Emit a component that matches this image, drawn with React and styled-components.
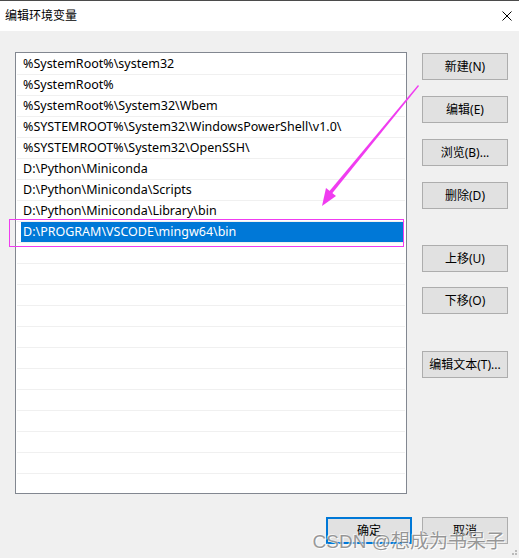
import React from 'react'
import styled, { createGlobalStyle, css } from 'styled-components'

const GlobalStyle = createGlobalStyle`
  html, body {
    margin: 0;
    padding: 0;
    background: #f0f0f0;
  }
  * {
    box-sizing: border-box;
  }
`

const font = `"Noto Sans", "Noto Sans CJK SC", sans-serif`

const paths = [
  '%SystemRoot%\\system32',
  '%SystemRoot%',
  '%SystemRoot%\\System32\\Wbem',
  '%SYSTEMROOT%\\System32\\WindowsPowerShell\\v1.0\\',
  '%SYSTEMROOT%\\System32\\OpenSSH\\',
  'D:\\Python\\Miniconda',
  'D:\\Python\\Miniconda\\Scripts',
  'D:\\Python\\Miniconda\\Library\\bin',
  'D:\\PROGRAM\\VSCODE\\mingw64\\bin',
]

const TOTAL_ROWS = 21
const SELECTED = 8

const Window = styled.div`
  position: relative;
  width: 519px;
  height: 558px;
  background: #f0f0f0;
  font-family: ${font};
  font-size: 12px;
  color: #000;
  overflow: hidden;
  display: flex;
  flex-direction: column;
`

const TitleBar = styled.div`
  height: 31px;
  flex: none;
  background: #fff;
  border-top: 1px solid #4b4b4b;
  display: flex;
  align-items: center;
  justify-content: space-between;
  padding: 0 7px 0 5px;
`

const Title = styled.span`
  font-size: 12px;
  line-height: 1;
  padding-bottom: 1px;
`

const CloseBtn = styled.svg`
  width: 10px;
  height: 10px;
  margin-top: -1px;
`

const Body = styled.div`
  flex: 1;
  display: flex;
  flex-direction: column;
  padding: 21px 11px 0 15px;
`

const Main = styled.div`
  display: flex;
  gap: 15px;
`

const ListBox = styled.div`
  width: 392px;
  height: 442px;
  background: #fff;
  border: 1px solid #828790;
  padding: 1px 1px 0 1px;
  overflow: hidden;
`

const Row = styled.div`
  height: 21px;
  border-bottom: 1px solid #f0f0f0;
  display: flex;
  align-items: stretch;
`

const Cell = styled.div`
  flex: 1;
  margin: 0 1px 0 4px;
  padding-left: 2px;
  display: flex;
  align-items: center;
  white-space: nowrap;
  font-size: 12.5px;
  line-height: 1;
  ${({ $selected }) =>
    $selected &&
    css`
      background: #0078d7;
      color: #fff;
    `}
`

const Side = styled.div`
  display: flex;
  flex-direction: column;
  width: 86px;
  padding-top: 1px;
`

const Group = styled.div`
  display: flex;
  flex-direction: column;
  gap: ${({ $gap }) => $gap}px;
  margin-top: ${({ $top }) => $top || 0}px;
`

const Button = styled.button`
  width: 86px;
  height: 27px;
  background: #e1e1e1;
  border: 1px solid #adadad;
  font-family: ${font};
  font-size: 12px;
  color: #000;
  padding: 0;
  line-height: 1;
  ${({ $default }) =>
    $default &&
    css`
      border: 2px solid #0078d7;
    `}
`

const Footer = styled.div`
  display: flex;
  justify-content: flex-end;
  gap: 10px;
  margin-top: 23px;
`

const Annotation = styled.div`
  position: absolute;
  left: 9px;
  top: 219px;
  width: 395px;
  height: 28px;
  border: 1px solid #f03cf0;
  pointer-events: none;
`

const Overlay = styled.svg`
  position: absolute;
  left: 0;
  top: 0;
  pointer-events: none;
`

const Watermark = styled.div`
  position: absolute;
  right: 14px;
  bottom: 5px;
  font-family: "Liberation Sans", "Noto Sans CJK SC", sans-serif;
  font-size: 19px;
  color: rgba(120, 120, 120, 0.75);
  text-shadow: 1px 1px 0 rgba(255, 255, 255, 0.9), -1px -1px 0 rgba(255, 255, 255, 0.6);
  white-space: nowrap;
  pointer-events: none;
`

const Grip = styled.svg`
  position: absolute;
  right: 1px;
  bottom: 1px;
`

export default function App() {
  const rows = Array.from({ length: TOTAL_ROWS }, (_, i) => paths[i] || '')

  return (
    <Window>
      <GlobalStyle />
      <TitleBar>
        <Title>编辑环境变量</Title>
        <CloseBtn viewBox="0 0 10 10">
          <path d="M0.5 0.5 L9.5 9.5 M9.5 0.5 L0.5 9.5" stroke="#000" strokeWidth="1" fill="none" />
        </CloseBtn>
      </TitleBar>
      <Body>
        <Main>
          <ListBox>
            {rows.map((p, i) => (
              <Row key={i}>
                <Cell $selected={i === SELECTED}>{p}</Cell>
              </Row>
            ))}
          </ListBox>
          <Side>
            <Group $gap={16}>
              <Button>新建(N)</Button>
              <Button>编辑(E)</Button>
              <Button>浏览(B)...</Button>
              <Button>删除(D)</Button>
            </Group>
            <Group $gap={15} $top={36}>
              <Button>上移(U)</Button>
              <Button>下移(O)</Button>
            </Group>
            <Group $gap={0} $top={37}>
              <Button>编辑文本(T)...</Button>
            </Group>
          </Side>
        </Main>
        <Footer>
          <Button $default>确定</Button>
          <Button>取消</Button>
        </Footer>
      </Body>

      <Annotation />
      <Overlay width="519" height="558" viewBox="0 0 519 558">
        <polygon points="418,85 419,86 330,196 327,194" fill="#f03cf0" />
        <polygon points="322,206 326,188 336,196" fill="#f03cf0" />
      </Overlay>
      <Watermark>CSDN @想成为书呆子</Watermark>
      <Grip width="10" height="10" viewBox="0 0 10 10">
        <rect x="7" y="3" width="2" height="2" fill="#bbb" />
        <rect x="4" y="6" width="2" height="2" fill="#bbb" />
        <rect x="7" y="6" width="2" height="2" fill="#bbb" />
      </Grip>
    </Window>
  )
}
